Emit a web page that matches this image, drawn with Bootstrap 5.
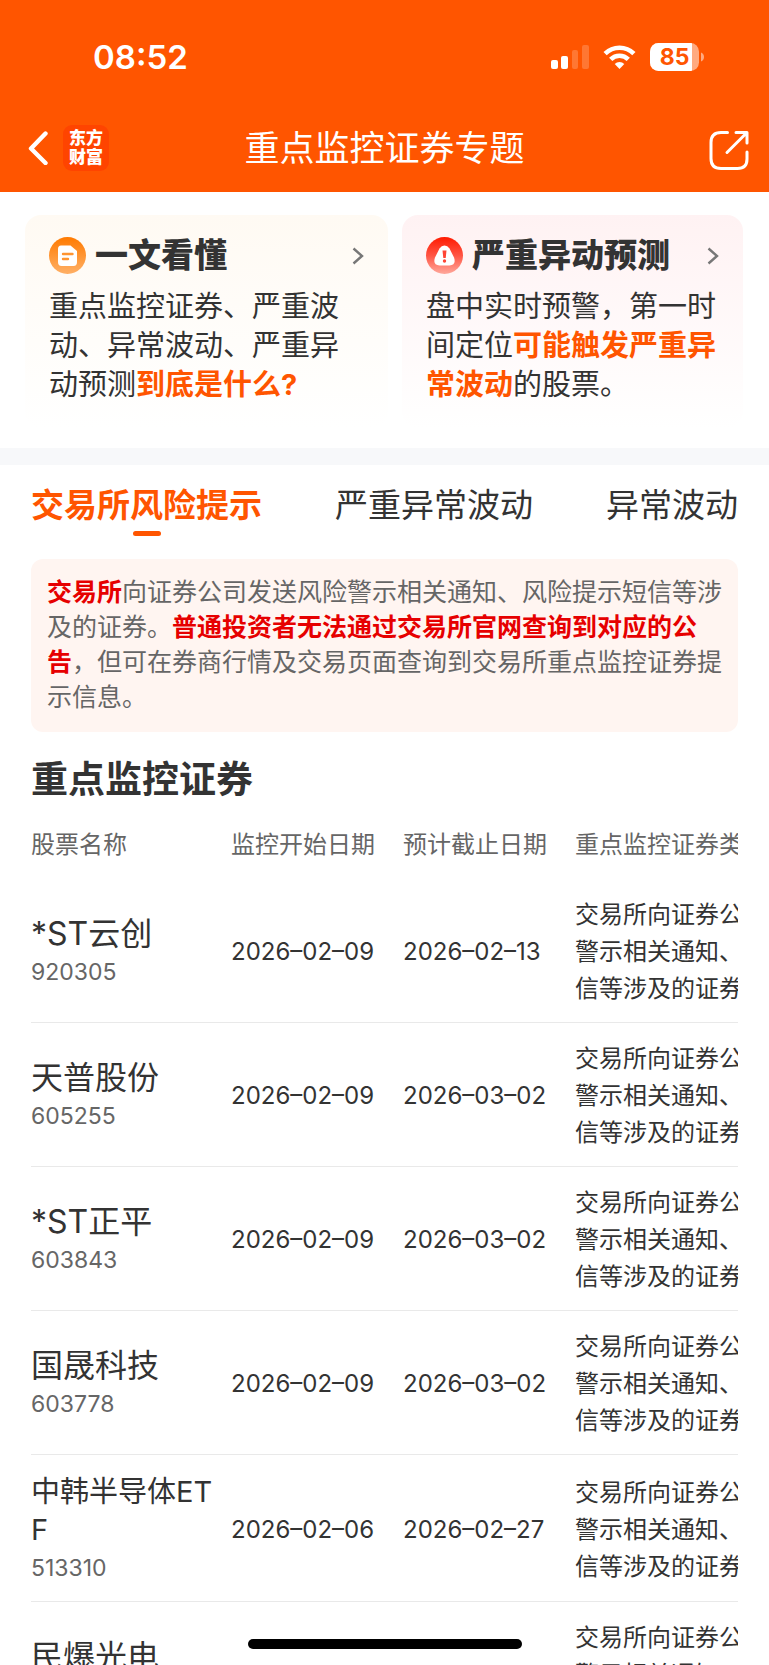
<!DOCTYPE html>
<html lang="zh-CN">
<head>
<meta charset="utf-8">
<meta name="viewport" content="width=device-width, initial-scale=1">
<title>重点监控证券专题</title>
<link href="https://cdn.jsdelivr.net/npm/bootstrap@5.3.0/dist/css/bootstrap.min.css" rel="stylesheet">
<style>
  :root { --brand: #ff5500; --ink: #333; --soft: #666; --alert: #e60000; }
  body { font-family: Inter, "Noto Sans CJK SC", sans-serif; color: var(--ink); background: #fff; }
  a, a:hover { color: inherit; text-decoration: none; }
  svg { display: block; flex: none; }

  .app-top { background: var(--brand); color: #fff; }
  .status-bar { padding: 36px 65px 26px 93px; }
  .clock { font-size: 33px; line-height: 42px; font-weight: 600; }
  .status-icons { gap: 14px; }
  .title-bar { height: 88px; padding: 0 20px; }
  .title-bar h1 { font-size: 35px; line-height: 44px; font-weight: 400; }
  .side { flex: 1 1 0; }
  .icon-btn { border: 0; padding: 0; background: none; color: inherit; }
  .brand-mark { width: 46px; height: 46px; border-radius: 9px; background: #ff4400; font-size: 17px; line-height: 19px; font-weight: 900; margin-left: 15px; }

  .promos { padding: 23px 26px 20px 25px; gap: 14px; }
  .promo { border-radius: 16px; padding: 22px 24px 24px; }
  .promo-guide { flex: 315 1 0; background: linear-gradient(#fffaf3, #fff); }
  .promo-forecast { flex: 293 1 0; background: linear-gradient(#fff2f3, #fff); }
  .promo h2 { font-size: 33px; line-height: 37px; font-weight: 900; margin: 0 0 0 9px; }
  .promo p { font-size: 29px; line-height: 39px; margin: 13px 0 0; }
  .promo strong { color: var(--brand); font-weight: 700; }
  .divider { height: 17px; background: #f7f8fa; }

  .topic-tabs { padding: 18px 31px 0; }
  .topic-tabs button { border: 0; background: none; padding: 0 0 9px; color: var(--ink); font-size: 33px; line-height: 44px; white-space: nowrap; position: relative; }
  .topic-tabs .active { color: var(--brand); font-weight: 700; }
  .topic-tabs .active::after { content: ""; position: absolute; left: 50%; bottom: 0; width: 28px; height: 5px; margin-left: -14px; border-radius: 3px; background: var(--brand); }

  .notice { margin: 23px 31px 0; padding: 16px 14px 17px 16px; border-radius: 12px; background: #fff5f1; color: var(--soft); font-size: 25px; line-height: 35px; }
  .notice strong { color: var(--alert); font-weight: 700; }

  .stocks { margin: 26px 31px 0; }
  .stocks h2 { font-size: 37px; line-height: 44px; font-weight: 700; margin: 0; }
  .stocks-scroll { overflow-x: auto; scrollbar-width: none; }
  .stocks-scroll::-webkit-scrollbar { display: none; }
  .stocks table { width: 850px; table-layout: fixed; border-collapse: collapse; }
  .stocks th, .stocks td { padding: 17px 0 15px; text-align: left; font-weight: 400; font-size: 24px; line-height: 37px; }
  .stocks thead th { padding: 24px 0 16px; color: var(--soft); }
  .stocks tbody tr { border-bottom: 1px solid #e9e9e9; }
  .stocks tbody th { padding: 18px 16px 14px 0; word-break: break-all; }
  .stock-name { display: block; font-size: 32px; line-height: 38px; }
  .stock-name.long { font-size: 29px; }
  .stocks .stock-code { display: block; color: var(--soft); font-size: 23px; line-height: 38px; }
  .home-bar { left: 0; right: 0; bottom: 16px; width: 274px; height: 10px; margin: 0 auto; border-radius: 5px; background: #000; }
</style>
</head>
<body>
<div class="vh-100 overflow-hidden">
  <header class="app-top">
    <div class="status-bar d-flex justify-content-between align-items-center">
      <div class="clock">08:52</div>
      <div class="status-icons d-flex align-items-center">
        <svg width="38" height="24" viewBox="0 0 38 24" fill="#fff" aria-hidden="true">
          <rect y="15" width="7" height="9" rx="2"/><rect x="10" y="11" width="7" height="13" rx="2"/>
          <rect x="21" y="5" width="6" height="19" rx="2" opacity=".2"/><rect x="31" width="7" height="24" rx="2" opacity=".2"/>
        </svg>
        <svg width="33" height="24" viewBox="0 0 32 24" aria-hidden="true">
          <g fill="none" stroke="#fff" stroke-width="4.6"><path d="M1.600 8.600a20.500 20.500 0 0 1 28.800 0"/><path d="M7.200 14.300a12.500 12.500 0 0 1 17.600 0"/></g>
          <path d="M16 24l-4.800-4.900a6.800 6.800 0 0 1 9.600 0z" fill="#fff"/>
        </svg>
        <svg width="54" height="28" viewBox="0 0 54 28" aria-label="85%">
          <defs><clipPath id="cell"><rect width="49" height="28" rx="8.5"/></clipPath></defs>
          <g clip-path="url(#cell)"><rect width="49" height="28" fill="#ffaa80"/><rect width="42" height="28" fill="#fff"/></g>
          <path d="M51 9.500q3 1.200 3 4.500t-3 4.500z" fill="#ffaa80"/>
          <text x="24.500" y="22" text-anchor="middle" font-family="Inter, sans-serif" font-size="23" font-weight="700" fill="#ff5500">85</text>
        </svg>
      </div>
    </div>
    <div class="title-bar d-flex align-items-center">
      <div class="side d-flex align-items-center">
        <button class="icon-btn ms-2" type="button" aria-label="返回">
          <svg width="20" height="34" viewBox="0 0 20 34" fill="none" stroke="#fff" stroke-width="4.4" stroke-linecap="round" stroke-linejoin="round"><path d="M17.500 2.500L3 17.500l14.500 14.500"/></svg>
        </button>
        <a href="#" class="brand-mark d-flex flex-column align-items-center justify-content-center"><span>东方</span><span>财富</span></a>
      </div>
      <h1 class="m-0">重点监控证券专题</h1>
      <div class="side d-flex justify-content-end">
        <button class="icon-btn pt-1" type="button" aria-label="分享">
          <svg width="40" height="40" viewBox="0 0 40 40" fill="none" stroke="#fff" stroke-width="3" stroke-linecap="round" stroke-linejoin="round"><path d="M18.500 2.500H12Q2 2.500 2 12.500V28.500q0 10 10 10h16.500q9.500 0 9.500-9.500v-7M27 2.500h11v10.500M37.500 3L18 22.500"/></svg>
        </button>
      </div>
    </div>
  </header>

  <main>
    <section class="promos d-flex">
      <a href="#" class="promo promo-guide">
        <div class="d-flex align-items-center">
          <svg width="37" height="37" viewBox="0 0 37 37" aria-hidden="true">
            <defs><linearGradient id="amber" x2="0" y2="1"><stop stop-color="#ff7a00"/><stop offset="1" stop-color="#ffb066"/></linearGradient></defs>
            <circle cx="18.500" cy="18.500" r="18.500" fill="url(#amber)"/>
            <path d="M12 8.500h9.500l6.500 5.500v11q0 4-3.500 4H12.500Q9 29 9 25V12q0-3.500 3-3.500z" fill="#fff"/>
            <path d="M14 17h9.500M14 22h5" stroke="#ff9430" stroke-width="2.400" stroke-linecap="round"/>
          </svg>
          <h2 class="me-auto">一文看懂</h2>
          <svg width="12" height="18" viewBox="0 0 12 18" fill="none" stroke="#777" stroke-width="2.400"><path d="M1.500 1.500L10 9l-8.500 7.500"/></svg>
        </div>
        <p>重点监控证券、严重波动、异常波动、严重异动预测<strong>到底是什么?</strong></p>
      </a>
      <a href="#" class="promo promo-forecast">
        <div class="d-flex align-items-center">
          <svg width="37" height="37" viewBox="0 0 37 37" aria-hidden="true">
            <defs><linearGradient id="red" x2="0" y2="1"><stop stop-color="#ff1a00"/><stop offset=".5" stop-color="#ff5544"/><stop offset="1" stop-color="#ffa89c"/></linearGradient></defs>
            <circle cx="18.500" cy="18.500" r="18.500" fill="url(#red)"/>
            <path d="M18.500 8.500q3 0 5 3l4.500 9q2.500 7.500-4.500 8h-10q-7-.5-4.500-8l4.500-9q2-3 5-3z" fill="#fff"/>
            <path d="M16.500 13.500h4l-.8 7.500h-2.400z" fill="#f43"/><circle cx="18.500" cy="24" r="1.700" fill="#f43"/>
          </svg>
          <h2 class="me-auto">严重异动预测</h2>
          <svg width="12" height="18" viewBox="0 0 12 18" fill="none" stroke="#777" stroke-width="2.400"><path d="M1.500 1.500L10 9l-8.500 7.500"/></svg>
        </div>
        <p>盘中实时预警，第一时间定位<strong>可能触发严重异常波动</strong>的股票。</p>
      </a>
    </section>
    <div class="divider"></div>

    <div class="topic-tabs d-flex justify-content-between" role="tablist">
      <button type="button" role="tab" class="active" aria-selected="true">交易所风险提示</button>
      <button type="button" role="tab" aria-selected="false">严重异常波动</button>
      <button type="button" role="tab" aria-selected="false">异常波动</button>
    </div>

    <div class="notice"><strong>交易所</strong>向证券公司发送风险警示相关通知、风险提示短信等涉及的证券。<strong>普通投资者无法通过交易所官网查询到对应的公告</strong>，但可在券商行情及交易页面查询到交易所重点监控证券提示信息。</div>

    <section class="stocks">
      <h2>重点监控证券</h2>
      <div class="stocks-scroll">
        <table>
          <colgroup><col style="width:200px"><col style="width:172px"><col style="width:172px"><col style="width:306px"></colgroup>
          <thead><tr><th scope="col">股票名称</th><th scope="col">监控开始日期</th><th scope="col">预计截止日期</th><th scope="col">重点监控证券类型</th></tr></thead>
          <tbody>
            <tr><th scope="row"><span class="stock-name">*ST云创</span><span class="stock-code">920305</span></th><td>2026–02–09</td><td>2026–02–13</td><td>交易所向证券公司发送风险<br>警示相关通知、风险提示短<br>信等涉及的证券</td></tr>
            <tr><th scope="row"><span class="stock-name">天普股份</span><span class="stock-code">605255</span></th><td>2026–02–09</td><td>2026–03–02</td><td>交易所向证券公司发送风险<br>警示相关通知、风险提示短<br>信等涉及的证券</td></tr>
            <tr><th scope="row"><span class="stock-name">*ST正平</span><span class="stock-code">603843</span></th><td>2026–02–09</td><td>2026–03–02</td><td>交易所向证券公司发送风险<br>警示相关通知、风险提示短<br>信等涉及的证券</td></tr>
            <tr><th scope="row"><span class="stock-name">国晟科技</span><span class="stock-code">603778</span></th><td>2026–02–09</td><td>2026–03–02</td><td>交易所向证券公司发送风险<br>警示相关通知、风险提示短<br>信等涉及的证券</td></tr>
            <tr><th scope="row"><span class="stock-name long">中韩半导体ETF</span><span class="stock-code">513310</span></th><td>2026–02–06</td><td>2026–02–27</td><td>交易所向证券公司发送风险<br>警示相关通知、风险提示短<br>信等涉及的证券</td></tr>
            <tr><th scope="row"><span class="stock-name">民爆光电</span><span class="stock-code">301362</span></th><td>2026–02–06</td><td>2026–02–27</td><td>交易所向证券公司发送风险<br>警示相关通知、风险提示短<br>信等涉及的证券</td></tr>
          </tbody>
        </table>
      </div>
    </section>
  </main>
  <div class="home-bar position-fixed"></div>
</div>
<script src="https://cdn.jsdelivr.net/npm/bootstrap@5.3.0/dist/js/bootstrap.bundle.min.js"></script>
</body>
</html>
